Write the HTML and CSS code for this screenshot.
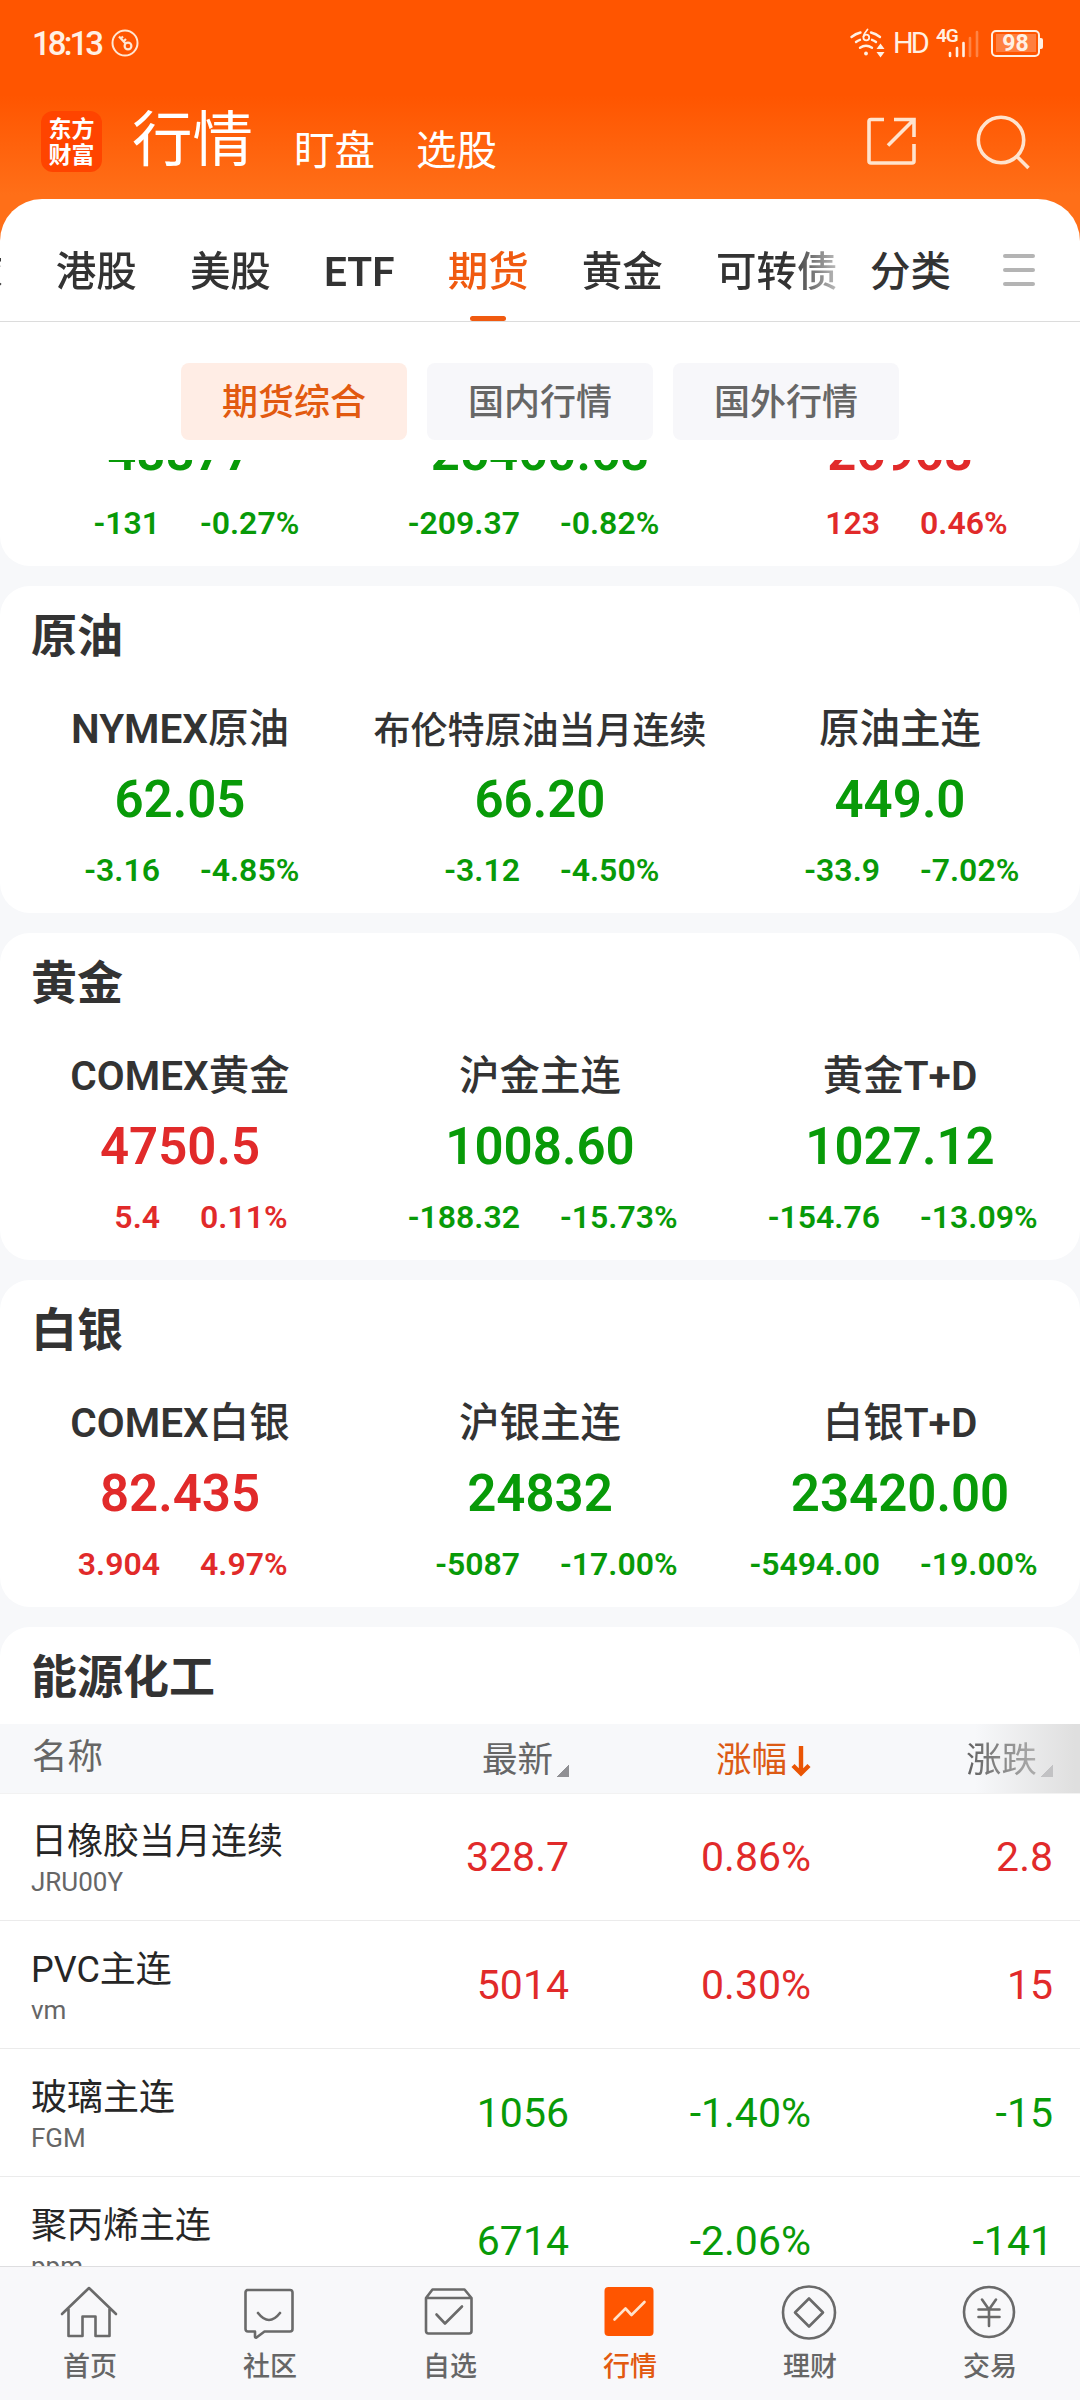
FILE: index.html
```
<!DOCTYPE html>
<html lang="zh-CN">

<head>
  <meta charset="UTF-8" />
  <title>行情</title>
  <link rel="stylesheet" href="styles.css">
</head>

<body>
  <header class="top">
    <div class="statusbar">
      <span class="time">18:13</span>
      <svg class="key" width="28" height="28" viewBox="0 0 28 28" fill="none" stroke="#ffe6d2">
        <circle cx="14" cy="14" r="12.5" stroke-width="2" />
        <circle cx="17" cy="17" r="3.4" stroke-width="2.2" />
        <path d="M14.5 14.5L8 7.5M12.5 12.5l2.5-2.5M9.5 10l2.5-2.5" stroke-width="2.2" />
      </svg>
      <div class="signals">
        <svg width="34" height="30" viewBox="0 0 34 30" fill="none" stroke="#fff0e4" stroke-width="2.4" stroke-linecap="round">
          <path d="M1.5 9q4-3.300 9-4.500M21 4.500q5 1.200 9 4.500M6 14q2-1.600 4-2.200M22 11.800q2 .6 4 2.200M10 19.800q6-4 12 0" />
          <path d="M17.5 1.5q-3.500 4-4 7" stroke-width="1.8" />
          <circle cx="16.3" cy="9.5" r="2.9" stroke-width="1.8" />
          <circle cx="16" cy="25.5" r="1.9" fill="#fff0e4" stroke="none" />
          <path d="M30.500 15.500l4 5.500h-8zM30.500 29.500l4-5.500h-8z" fill="#fff0e4" stroke="none" />
        </svg>
        <span class="hd">HD</span>
        <div class="cell-signal">
          <span class="net">4G</span>
          <svg width="46" height="30" viewBox="0 0 46 30" stroke="#fff0e4" stroke-width="2.6" stroke-linecap="round">
            <path d="M14 25v3M21 20v8M27.500 15v13" />
            <path d="M34 10v18M41 4v24" opacity=".3" />
          </svg>
        </div>
        <div class="battery"><span>98</span></div>
      </div>
    </div>
    <div class="titlebar">
      <div class="logo"><span>东方</span><span>财富</span></div>
      <h1>行情</h1>
      <span class="sub">盯盘</span>
      <span class="sub">选股</span>
      <div class="actions">
        <svg width="52" height="52" viewBox="0 0 52 52" fill="none" stroke="#ffe3cd" stroke-width="3.6">
          <path d="M19 4.500H6q-2 0-2 2V46q0 2 2 2h41q2 0 2-2V29M29 4.500h20V22M48.500 5L23 30.500" />
        </svg>
        <svg width="56" height="56" viewBox="0 0 56 56" fill="none" stroke="#ffe3cd" stroke-width="3.6">
          <circle cx="26" cy="25" r="22.7" />
          <path d="M42 41.500L53.500 53" />
        </svg>
      </div>
    </div>
  </header>

  <main class="panel">
    <nav class="tabs">
      <div class="scroller">
        <span>全球</span>
        <span>港股</span>
        <span>美股</span>
        <span class="en">ETF</span>
        <span class="active">期货</span>
        <span>黄金</span>
        <span>可转债</span>
      </div>
      <span>分类</span>
      <div class="menu"><i></i><i></i><i></i></div>
    </nav>
    <div class="chips">
      <span class="chip on">期货综合</span>
      <span class="chip">国内行情</span>
      <span class="chip">国外行情</span>
    </div>

    <div class="list">
      <section class="card cut">
        <div class="quotes">
          <div class="quote down"><b>48877</b><p><span>-131</span><span>-0.27%</span></p></div>
          <div class="quote down"><b>25460.68</b><p><span>-209.37</span><span>-0.82%</span></p></div>
          <div class="quote up"><b>26968</b><p><span>123</span><span>0.46%</span></p></div>
        </div>
      </section>

      <section class="card">
        <h2>原油</h2>
        <div class="quotes">
          <div class="quote down"><h3><span class="en">NYMEX</span>原油</h3><b>62.05</b><p><span>-3.16</span><span>-4.85%</span></p></div>
          <div class="quote down"><h3 class="long">布伦特原油当月连续</h3><b>66.20</b><p><span>-3.12</span><span>-4.50%</span></p></div>
          <div class="quote down"><h3>原油主连</h3><b>449.0</b><p><span>-33.9</span><span>-7.02%</span></p></div>
        </div>
      </section>

      <section class="card">
        <h2>黄金</h2>
        <div class="quotes">
          <div class="quote up"><h3><span class="en">COMEX</span>黄金</h3><b>4750.5</b><p><span>5.4</span><span>0.11%</span></p></div>
          <div class="quote down"><h3>沪金主连</h3><b>1008.60</b><p><span>-188.32</span><span>-15.73%</span></p></div>
          <div class="quote down"><h3>黄金<span class="en">T+D</span></h3><b>1027.12</b><p><span>-154.76</span><span>-13.09%</span></p></div>
        </div>
      </section>

      <section class="card">
        <h2>白银</h2>
        <div class="quotes">
          <div class="quote up"><h3><span class="en">COMEX</span>白银</h3><b>82.435</b><p><span>3.904</span><span>4.97%</span></p></div>
          <div class="quote down"><h3>沪银主连</h3><b>24832</b><p><span>-5087</span><span>-17.00%</span></p></div>
          <div class="quote down"><h3>白银<span class="en">T+D</span></h3><b>23420.00</b><p><span>-5494.00</span><span>-19.00%</span></p></div>
        </div>
      </section>

      <section class="card table">
        <h2>能源化工</h2>
        <div class="row head">
          <span class="first">名称</span>
          <span>最新<i class="tri"></i></span>
          <span class="sort">涨幅<svg width="20" height="32" viewBox="0 0 20 32" fill="none" stroke="#ea5504" stroke-width="4.4"><path d="M10 1v27M2 20.500l8 8 8-8" /></svg></span>
          <span>涨跌<i class="tri"></i></span>
        </div>
        <div class="row up">
          <div class="name">日橡胶当月连续<small>JRU00Y</small></div>
          <span>328.7</span><span>0.86%</span><span>2.8</span>
        </div>
        <div class="row up">
          <div class="name">PVC主连<small>vm</small></div>
          <span>5014</span><span>0.30%</span><span>15</span>
        </div>
        <div class="row down">
          <div class="name">玻璃主连<small>FGM</small></div>
          <span>1056</span><span>-1.40%</span><span>-15</span>
        </div>
        <div class="row down">
          <div class="name">聚丙烯主连<small>ppm</small></div>
          <span>6714</span><span>-2.06%</span><span>-141</span>
        </div>
      </section>
    </div>
  </main>

  <footer class="nav">
    <div class="item">
      <svg viewBox="0 0 56 56"><path d="M1 29L28 3l27 26M7.500 24v27h14V31.500h13V51h14V24" /></svg>
      首页
    </div>
    <div class="item">
      <svg viewBox="0 0 56 56"><path d="M6 5h43q2.500 0 2.500 2.500V44q0 2.500-2.500 2.500H23.500L15.500 52.500q-1.500.5-1.500-1v-5H7Q4.500 46.500 4.500 44V7.500Q4.500 5 7 5M17 28q11 14 22 0" /></svg>
      社区
    </div>
    <div class="item">
      <svg viewBox="0 0 56 56"><path d="M5 13L11.500 4.500h32L50.500 13v33q0 2.500-2.500 2.500H7.500Q5 48.500 5 46V13h45.500M15.500 29.500l8.500 9L41 21.500" /></svg>
      自选
    </div>
    <div class="item current">
      <svg viewBox="0 0 56 56"><rect x="3.5" y="2" width="49" height="49" rx="4" fill="#ff5500" stroke="none" /><path d="M13.500 34.500l11-11 6 6.500 13-13" stroke="#ffe3cd" /></svg>
      行情
    </div>
    <div class="item">
      <svg viewBox="0 0 56 56"><circle cx="28" cy="27.5" r="26" /><path d="M28 13.500l14 14-14 14-14-14z" /></svg>
      理财
    </div>
    <div class="item">
      <svg viewBox="0 0 56 56"><circle cx="28" cy="27" r="25" /><path d="M21 14.500l7 10 7-10M17.500 24.500h21M17.500 32h21M28 24.500V41" /></svg>
      交易
    </div>
  </footer>
</body>

</html>
```
FILE: styles.css
```
* {
  box-sizing: border-box;
}

body {
  margin: 0;
  width: 1080px;
  height: 2400px;
  overflow: hidden;
  display: flex;
  flex-direction: column;
  font-family: Roboto, "Noto Sans CJK SC", sans-serif;
  color: #333;
  background: #f7f8fa;
}

h1, h2, h3, p {
  margin: 0;
}

svg {
  display: block;
  flex: none;
  overflow: visible;
}

/* header */
.top {
  flex: none;
  height: 245px;
  background: linear-gradient(#ff5500 95px, #ff6f18 195px);
  color: #fff;
}

.statusbar {
  display: flex;
  align-items: center;
  height: 86px;
  padding: 0 37px 0 32px;
}

.time {
  width: 79px;
  font-size: 33px;
  font-weight: 500;
  letter-spacing: -2.9px;
  color: #fff0e4;
}

.signals {
  display: flex;
  align-items: center;
  margin-left: auto;
  color: #fff0e4;
}

.hd {
  width: 43px;
  margin-left: 9px;
  font-size: 29px;
  font-weight: 400;
  letter-spacing: -3px;
}

.cell-signal {
  position: relative;
  width: 46px;
  margin-right: 9px;
}

.net {
  position: absolute;
  left: 0;
  top: -1px;
  font-size: 19px;
  line-height: 18px;
  font-weight: 600;
  letter-spacing: -1px;
}

.battery {
  position: relative;
  width: 49px;
  height: 27px;
  margin-right: 3px;
  padding: 2.5px;
  border: 2px solid #fff0e4;
  border-radius: 5px;
}

.battery::after {
  content: "";
  position: absolute;
  right: -5px;
  top: 6px;
  width: 3px;
  height: 11px;
  border-radius: 0 2px 2px 0;
  background: #fff0e4;
}

.battery span {
  display: block;
  height: 18px;
  background: rgba(255, 255, 255, .25);
  font-size: 23px;
  line-height: 19px;
  font-weight: 700;
  text-align: center;
}

.titlebar {
  display: flex;
  height: 110px;
  padding: 0 49px 0 41px;
}

.logo {
  width: 61px;
  height: 61px;
  margin: 25px 30px 0 0;
  padding-top: 6px;
  border-radius: 12px;
  background: #ff4400;
  font-size: 23px;
  line-height: 26px;
  font-weight: 700;
  text-align: center;
}

.logo span {
  display: block;
}

.titlebar h1 {
  margin-right: 41px;
  font-size: 60.5px;
  line-height: 60px;
  padding-top: 25px;
  font-weight: 400;
}

.sub {
  padding-top: 45px;
  margin-right: 41px;
  font-size: 40.5px;
  line-height: 40px;
}

.actions {
  display: flex;
  gap: 58px;
  margin: 29px 0 0 auto;
}

/* panel */
.panel {
  flex: 1;
  min-height: 0;
  margin-top: -46px;
  display: flex;
  flex-direction: column;
  border-radius: 42px 42px 0 0;
  background: #fff;
}

.tabs {
  flex: none;
  display: flex;
  height: 123px;
  border-bottom: 1px solid #dcdcdc;
  font-size: 40.5px;
  line-height: 146px;
  font-weight: 500;
}

.en {
  font-weight: 600;
}

.scroller {
  display: flex;
  gap: 53.2px;
  flex: none;
  width: 843px;
  height: 123px;
  margin-right: 27px;
  overflow: hidden;
  -webkit-mask-image: linear-gradient(90deg, #000 790px, transparent 860px);
  mask-image: linear-gradient(90deg, #000 790px, transparent 860px);
}

.scroller span {
  flex: none;
}

.scroller span:first-child {
  margin-left: -78.5px;
}

.active {
  display: flex;
  flex-direction: column;
  align-items: center;
  color: #f05a10;
}

.active::after {
  content: "";
  width: 36px;
  height: 5px;
  margin-top: -29px;
  border-radius: 2.5px;
  background: #f05a10;
}

.menu {
  display: flex;
  flex-direction: column;
  gap: 10px;
  margin: 55px 0 0 52px;
}

.menu i {
  width: 32px;
  height: 4px;
  border-radius: 2px;
  background: #b4b4b4;
}

.chips {
  flex: none;
  display: flex;
  justify-content: center;
  gap: 20px;
  padding: 41px 0 20px;
}

.chip {
  width: 226px;
  height: 77px;
  border-radius: 8px;
  background: #f7f7fa;
  color: #666;
  font-size: 36px;
  line-height: 81px;
  font-weight: 500;
  text-align: center;
}

.chip.on {
  background: #ffede5;
  color: #e25a10;
}

/* quote cards */
.list {
  flex: 1;
  min-height: 0;
  overflow: hidden;
  background: #f7f8fa;
}

.card {
  height: 327px;
  margin-bottom: 20px;
  border-radius: 30px;
  background: #fff;
  overflow: hidden;
}

.card.cut {
  display: flex;
  align-items: flex-end;
  height: 106px;
  border-radius: 0 0 30px 30px;
}

.card h2 {
  height: 107px;
  padding-left: 31px;
  font-size: 46px;
  line-height: 100px;
  font-weight: 700;
}

.quotes {
  display: grid;
  grid-template-columns: repeat(3, 360px);
  text-align: center;
}

.quote h3 {
  height: 71px;
  font-size: 40.5px;
  line-height: 73px;
  font-weight: 500;
  color: #333;
  white-space: nowrap;
}

.quote h3 .en {
  color: #333;
}

.quote h3.long {
  font-size: 37px;
  line-height: 77px;
}

.quote b {
  display: block;
  height: 71px;
  font-size: 51px;
  line-height: 71px;
  font-weight: 600;
}

.quote p {
  display: grid;
  grid-template-columns: 1fr 1fr;
  gap: 40px;
  height: 78px;
  font-size: 32px;
  line-height: 71px;
  font-weight: 600;
  text-align: left;
}

.quote p span:first-child {
  text-align: right;
}

.up b, .up p, .up span {
  color: #e12a2a;
}

.down b, .down p, .down span {
  color: #089a08;
}

/* table */
.card.table {
  height: auto;
  margin: 0;
  border-radius: 30px 30px 0 0;
}

.table h2 {
  height: 97px;
}

.row {
  display: grid;
  grid-template-columns: 329px 240px 242px 242px;
  height: 128px;
  padding-right: 27px;
  border-bottom: 1px solid #ebebeb;
  font-size: 41px;
  line-height: 129px;
  text-align: right;
}

.row.head {
  height: 70px;
  border-color: #f2f2f2;
  background: linear-gradient(90deg, transparent 975px, #dfdfdf 1075px), #f7f8fa;
  color: #666;
  font-size: 35.5px;
  line-height: 73px;
}

.head + .row {
  height: 127px;
  line-height: 127px;
}

.head span {
  display: flex;
  justify-content: flex-end;
  align-items: center;
}

.head .first {
  justify-content: flex-start;
  padding-left: 32px;
  line-height: 67px;
  align-items: flex-start;
}

.tri {
  width: 13px;
  height: 13px;
  margin: 20px 0 0 3px;
  background: linear-gradient(135deg, transparent 50%, #909094 50%);
}

.head span:last-child {
  color: transparent;
  background: linear-gradient(90deg, #666 160px, #c0c0c0 242px);
  -webkit-background-clip: text;
  background-clip: text;
}

.head span:last-child .tri {
  background: linear-gradient(135deg, transparent 50%, #c2c2c4 50%);
}

.head .sort {
  color: #dc5a14;
}

.sort svg {
  margin-left: 4px;
}

.name {
  padding: 28px 0 0 31px;
  font-size: 36px;
  line-height: 42px;
  color: #262626;
  text-align: left;
  white-space: nowrap;
}

.head + .row .name {
  padding-top: 27px;
}

.name small {
  display: block;
  font-size: 26px;
  line-height: 39px;
  color: #666;
}

/* bottom nav */
.nav {
  flex: none;
  display: grid;
  grid-template-columns: repeat(6, 1fr);
  height: 134px;
  border-top: 1px solid #dedee0;
  background: #f8f8fa;
}

.item {
  display: flex;
  flex-direction: column;
  align-items: center;
  padding-top: 18px;
  font-size: 27px;
  line-height: 52px;
  font-weight: 500;
  color: #666;
}

.item svg {
  width: 56px;
  height: 56px;
  margin-right: 2px;
  fill: none;
  stroke: #6a6a6a;
  stroke-width: 2.6;
  stroke-linejoin: round;
  stroke-linecap: round;
}

.item.current {
  color: #e25a10;
}
```
